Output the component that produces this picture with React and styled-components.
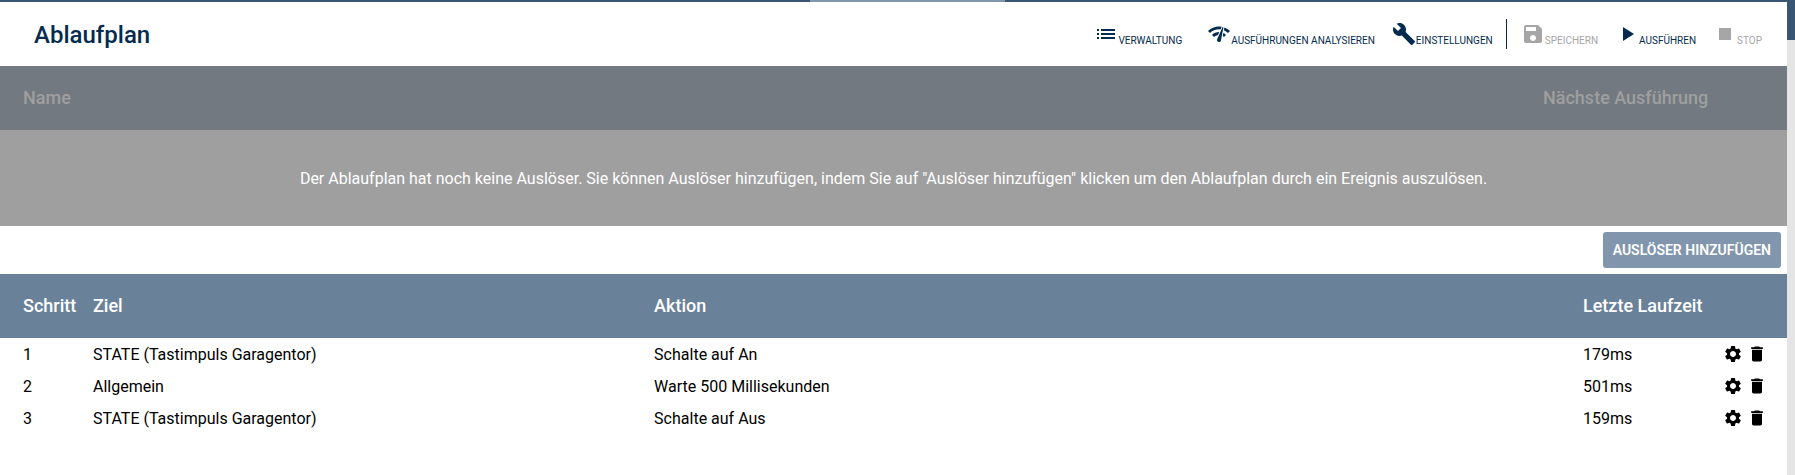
import React from "react";
import styled, { createGlobalStyle } from "styled-components";
import {
  MdBuild,
  MdDelete,
  MdList,
  MdNetworkCheck,
  MdPlayArrow,
  MdSave,
  MdSettings,
  MdStop,
} from "react-icons/md";

const steps = [
  {
    id: 1,
    target: "STATE (Tastimpuls Garagentor)",
    action: "Schalte auf An",
    runtime: "179ms",
  },
  {
    id: 2,
    target: "Allgemein",
    action: "Warte 500 Millisekunden",
    runtime: "501ms",
  },
  {
    id: 3,
    target: "STATE (Tastimpuls Garagentor)",
    action: "Schalte auf Aus",
    runtime: "159ms",
  },
];

const ToolbarItem = ({ icon: Icon, label, disabled }) => (
  <ToolButton type="button" disabled={disabled}>
    <Icon size={24} />
    <ToolLabel>{label}</ToolLabel>
  </ToolButton>
);

// Triggers of the schedule, greyed out while there are none
const TriggerTable = () => (
  <Table>
    <colgroup>
      <col />
      <Col $width="247px" />
    </colgroup>
    <thead>
      <tr>
        <HeadCell $muted>Name</HeadCell>
        <HeadCell $muted>Nächste Ausführung</HeadCell>
      </tr>
    </thead>
    <tbody>
      <tr>
        <EmptyCell colSpan={2}>
          Der Ablaufplan hat noch keine Auslöser. Sie können Auslöser
          hinzufügen, indem Sie auf "Auslöser hinzufügen" klicken um den
          Ablaufplan durch ein Ereignis auszulösen.
        </EmptyCell>
      </tr>
    </tbody>
  </Table>
);

const StepTable = () => (
  <Table>
    <colgroup>
      <Col $width="90px" />
      <Col $width="31.4%" />
      <col />
      <Col $width="140px" />
      <Col $width="67px" />
    </colgroup>
    <thead>
      <tr>
        <HeadCell>Schritt</HeadCell>
        <HeadCell>Ziel</HeadCell>
        <HeadCell>Aktion</HeadCell>
        <HeadCell>Letzte Laufzeit</HeadCell>
        <HeadCell as="td" />
      </tr>
    </thead>
    <tbody>
      {steps.map((step) => (
        <tr key={step.id}>
          <Cell>{step.id}</Cell>
          <Cell>{step.target}</Cell>
          <Cell>{step.action}</Cell>
          <Cell>{step.runtime}</Cell>
          <Cell>
            <Actions>
              <IconButton type="button" aria-label="Bearbeiten">
                <MdSettings size={20} />
              </IconButton>
              <IconButton type="button" aria-label="Löschen">
                <MdDelete size={20} />
              </IconButton>
            </Actions>
          </Cell>
        </tr>
      ))}
    </tbody>
  </Table>
);

const App = () => {
  return (
    <>
      <GlobalStyle />
      <Page>
        <Content>
          <TopLine>
            <TopMarker />
          </TopLine>
          <Header>
            <Title>Ablaufplan</Title>
            <Toolbar>
              <ToolGroup $gap="25px">
                <ToolbarItem icon={MdList} label="VERWALTUNG" />
                <ToolGroup $gap="17px">
                  <ToolbarItem
                    icon={MdNetworkCheck}
                    label="AUSFÜHRUNGEN ANALYSIEREN"
                  />
                  <ToolbarItem icon={MdBuild} label="EINSTELLUNGEN" />
                </ToolGroup>
              </ToolGroup>
              <Divider />
              <ToolGroup $gap="17px">
                <ToolbarItem icon={MdSave} label="SPEICHERN" disabled />
                <ToolbarItem icon={MdPlayArrow} label="AUSFÜHREN" />
                <ToolbarItem icon={MdStop} label="STOP" disabled />
              </ToolGroup>
            </Toolbar>
          </Header>
          <TriggerTable />
          <AddBar>
            <AddButton type="button">AUSLÖSER HINZUFÜGEN</AddButton>
          </AddBar>
          <StepTable />
        </Content>
        <Track>
          <Thumb />
        </Track>
      </Page>
    </>
  );
};

const GlobalStyle = createGlobalStyle`
  * {
    box-sizing: border-box;
  }

  body {
    margin: 0;
    background: #fff;
    color: #000;
    font-family: Roboto, "Liberation Sans", sans-serif;
    font-size: 16px;
  }

  button {
    margin: 0;
    padding: 0;
    border: none;
    background: none;
    color: inherit;
    font: inherit;
    cursor: pointer;
  }
`;

const Page = styled.div`
  display: flex;
  min-height: 100vh;
`;

const Content = styled.main`
  flex: 1;
  min-width: 0;
`;

const Track = styled.div`
  width: 8px;
  background: #e5e5e5;
`;

const Thumb = styled.div`
  height: 40px;
  background: #385674;
`;

const TopLine = styled.div`
  height: 2px;
  padding-left: 45.3%;
  background: #385674;
`;

const TopMarker = styled.div`
  width: 20%;
  height: 2px;
  background: #8196ac;
`;

const Header = styled.header`
  display: flex;
  align-items: center;
  justify-content: space-between;
  height: 64px;
  padding: 0 25px 0 34px;
`;

const Title = styled.h1`
  margin: 0;
  padding-top: 2px;
  color: #042b4f;
  font-size: 24px;
  font-weight: 500;
  line-height: 32px;
`;

const Toolbar = styled.div`
  display: flex;
  align-items: center;
`;

const ToolGroup = styled.div`
  display: flex;
  align-items: center;
  gap: ${(props) => props.$gap};
`;

const ToolButton = styled.button`
  display: flex;
  align-items: flex-end;
  color: #042b4f;

  &:disabled {
    color: #a6a6a6;
    cursor: default;
  }
`;

const ToolLabel = styled.span`
  font-size: 10px;
  line-height: 10px;
  white-space: nowrap;
`;

const Divider = styled.div`
  width: 1px;
  height: 30px;
  margin: 0 14px 0 13px;
  background: #042b4f;
`;

const Table = styled.table`
  width: 100%;
  table-layout: fixed;
  border-collapse: collapse;
`;

const Col = styled.col`
  width: ${(props) => props.$width};
`;

const HeadCell = styled.th`
  height: 64px;
  padding: 0 3px 2px;
  background: ${(props) => (props.$muted ? "#727981" : "#6a8299")};
  color: ${(props) => (props.$muted ? "#9f9f9f" : "#fff")};
  font-size: 18px;
  font-weight: 500;
  text-align: left;
  white-space: nowrap;

  &:first-child {
    padding-left: 23px;
  }
`;

const Cell = styled.td`
  height: 32px;
  padding: 0 3px;

  &:first-child {
    padding-left: 23px;
  }
`;

const EmptyCell = styled.td`
  height: 96px;
  padding: 0 24px;
  background: #9f9f9f;
  color: #fff;
  text-align: center;
`;

const Actions = styled.div`
  display: flex;
  gap: 4px;
`;

const IconButton = styled.button`
  display: flex;
`;

const AddBar = styled.div`
  display: flex;
  justify-content: flex-end;
  padding: 6px;
`;

const AddButton = styled.button`
  height: 36px;
  padding: 0 10px;
  border-radius: 3px;
  background: #8196ac;
  color: #fff;
  font-size: 14px;
  font-weight: 600;
`;

export default App;
